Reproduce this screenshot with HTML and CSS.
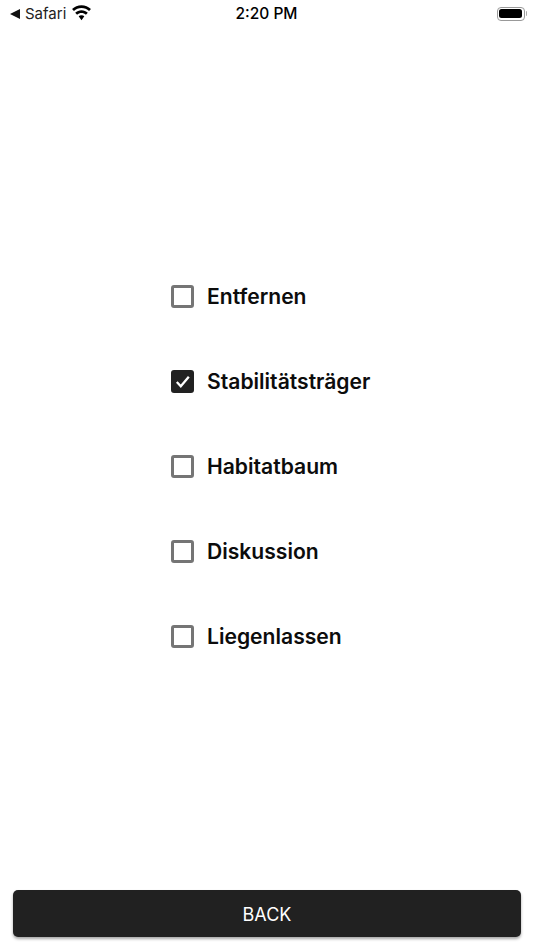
FILE: index.html
```
<!DOCTYPE html>
<html lang="en">
  <head>
    <meta charset="UTF-8" />
    <meta name="viewport" content="width=device-width, initial-scale=1.0" />
    <title>Auswahl</title>
    <link rel="stylesheet" href="styles.css">
  </head>
  <body>
    <div class="status-bar">
      <div class="status-left">
        <svg class="back-arrow" viewBox="0 0 10 10"><path d="M0 5 L10 0 V10 Z" /></svg>
        <span>Safari</span>
        <svg class="wifi" viewBox="0 0 20 15">
          <path d="M10 2.800c2.800 0 5.300 1.100 7.200 2.900l1.800-1.900C16.600 1.500 13.400 0 10 0S3.400 1.500 1 3.800l1.800 1.900C4.700 3.900 7.200 2.800 10 2.800z" />
          <path d="M10 7.500c1.600 0 3.100.600 4.200 1.700l1.800-1.900C14.400 5.800 12.300 4.800 10 4.800s-4.400 1-6 2.500l1.800 1.900c1.100-1.100 2.600-1.700 4.200-1.700z" />
          <path d="M10 9.600c-1.100 0-2 .400-2.700 1.100L10 14.500l2.700-3.800c-.7-.7-1.600-1.100-2.700-1.100z" />
        </svg>
      </div>
      <div class="status-time">2:20 PM</div>
      <div class="status-right">
        <div class="battery"><div class="battery-fill"></div></div>
        <div class="battery-tip"></div>
      </div>
    </div>

    <div class="options">
      <label class="option"><span class="box"></span><span class="label">Entfernen</span></label>
      <label class="option">
        <span class="box checked">
          <svg viewBox="0 0 23 23"><path d="M5.800 12 L9.800 16.200 L17.800 6.800" /></svg>
        </span>
        <span class="label">Stabilitätsträger</span>
      </label>
      <label class="option"><span class="box"></span><span class="label">Habitatbaum</span></label>
      <label class="option"><span class="box"></span><span class="label">Diskussion</span></label>
      <label class="option"><span class="box"></span><span class="label">Liegenlassen</span></label>
    </div>

    <div class="footer">
      <button class="back-btn">BACK</button>
    </div>
  </body>
</html>
```

FILE: styles.css
```
* {
  box-sizing: border-box;
}
body {
  margin: 0;
  height: 950px;
  background: #fff;
  color: #000;
  font-family: Inter, "Liberation Sans", sans-serif;
  display: flex;
  flex-direction: column;
  overflow: hidden;
}

.status-bar {
  height: 28px;
  padding: 0 7px 1px 10px;
  display: grid;
  grid-template-columns: 1fr auto 1fr;
  align-items: center;
  font-size: 15px;
}
.status-left {
  display: flex;
  align-items: center;
  gap: 5px;
  color: #222;
}
.back-arrow {
  width: 10px;
  height: 10px;
  fill: #111;
}
.wifi {
  width: 21px;
  height: 16px;
  fill: #000;
  margin-top: -2px;
}
.status-time {
  font-weight: 500;
  font-size: 15.500px;
  margin-right: 4px;
}
.status-right {
  display: flex;
  justify-content: flex-end;
  align-items: center;
}
.battery {
  width: 28px;
  height: 14px;
  border: 1px solid #999;
  border-radius: 4px;
  padding: 1.500px;
}
.battery-fill {
  height: 100%;
  background: #000;
  border-radius: 2.500px;
}
.battery-tip {
  width: 1.500px;
  height: 5px;
  margin-left: 1px;
  background: #aaa;
  border-radius: 0 1px 1px 0;
}

.options {
  flex: 1;
  padding: 251px 0 0 171px;
  display: flex;
  flex-direction: column;
  gap: 50px;
}
.option {
  height: 35px;
  display: flex;
  align-items: center;
  gap: 13px;
  font-size: 21.100px;
  font-weight: 600;
  color: #0c0c0c;
}
.label {
  margin-top: -1px;
}
.box {
  width: 23px;
  height: 23px;
  border: 3px solid #757575;
  border-radius: 3px;
  flex-shrink: 0;
}
.box.checked {
  background: #212121;
  border: none;
}
.box svg {
  display: block;
  width: 23px;
  height: 23px;
  fill: none;
  stroke: #fff;
  stroke-width: 2.300;
}

.footer {
  padding: 0 13px 13px;
}
.back-btn {
  width: 100%;
  height: 47px;
  padding-top: 2px;
  background: #212121;
  color: #fff;
  border: none;
  border-radius: 5px;
  font-family: inherit;
  font-size: 18px;
  box-shadow: 0 2px 3px rgba(0, 0, 0, 0.35);
}
```
